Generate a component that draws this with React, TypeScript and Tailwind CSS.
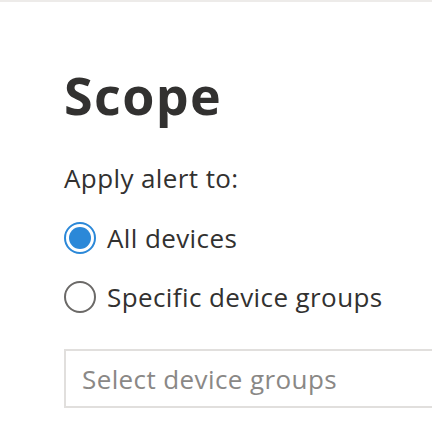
import { useState } from 'react';

// Scope step of the alert wizard: pick all devices or specific groups.

const FONT = { fontFamily: '"Open Sans", "Noto Sans", sans-serif' };

type ScopeKind = 'all' | 'groups';

export default function App() {
  const [scope, setScope] = useState<ScopeKind>('all');

  return (
    <div className="min-h-screen overflow-hidden bg-white text-[#323130]" style={FONT}>
      <div className="h-[2px] bg-[#edebe9]" />
      <div className="px-[64px] pt-[67px]">
        <h1 className="text-[52px] font-bold leading-[52px] tracking-[1.4px]">Scope</h1>
        <p className="mt-[41px] text-[26px] leading-[32px] tracking-[0.4px]">Apply alert to:</p>

        <div className="mt-[28px] flex flex-col items-start gap-[27px]">
          <Radio checked={scope === 'all'} label="All devices" onSelect={() => setScope('all')} />
          <Radio
            checked={scope === 'groups'}
            label="Specific device groups"
            onSelect={() => setScope('groups')}
          />
        </div>

        <div className="mt-[36px] -mr-[64px] flex h-[59px] items-center border-2 border-r-0 border-[#e1dfdd] pl-[16px]">
          <span className="whitespace-nowrap text-[26px] leading-[32px] tracking-[0.4px] text-[#8a8886]">
            Select device groups
          </span>
        </div>
      </div>
    </div>
  );
}

// ── Radio ────────────────────────────────────────────────────────────────

interface RadioProps {
  checked: boolean;
  label: string;
  onSelect: () => void;
}

function Radio({ checked, label, onSelect }: RadioProps) {
  return (
    <button
      type="button"
      onClick={onSelect}
      className="flex h-[32px] shrink-0 items-center gap-[11px] whitespace-nowrap text-left"
    >
      {checked ? (
        <span className="flex h-[32px] w-[32px] shrink-0 items-center justify-center rounded-full border-2 border-[#2b88d8]">
          <span className="h-[22px] w-[22px] rounded-full bg-[#2b88d8]" />
        </span>
      ) : (
        <span className="h-[32px] w-[32px] shrink-0 rounded-full border-2 border-[#6b6967]" />
      )}
      <span className="text-[26px] leading-[32px] tracking-[0.4px]">{label}</span>
    </button>
  );
}
